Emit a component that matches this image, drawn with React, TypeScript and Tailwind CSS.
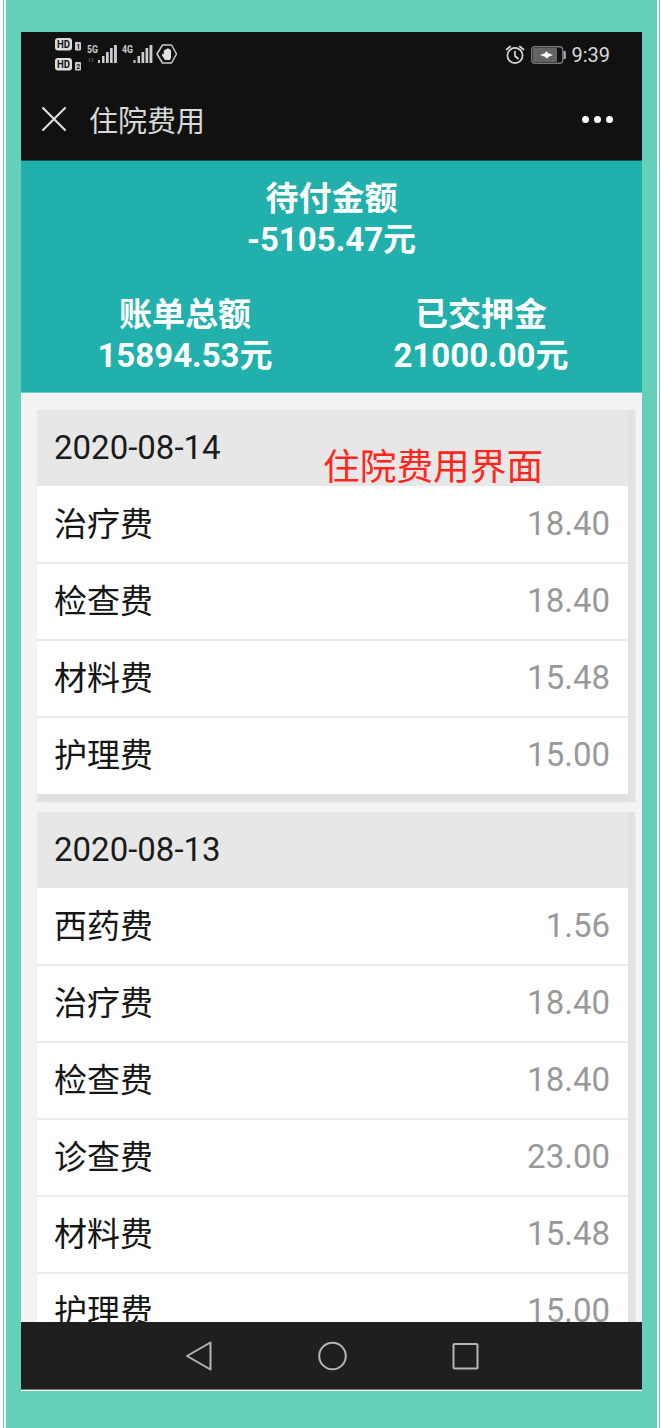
import React from 'react';

const bills = [
    {
        date: '2020-08-14',
        items: [
            { name: '治疗费', amount: '18.40' },
            { name: '检查费', amount: '18.40' },
            { name: '材料费', amount: '15.48' },
            { name: '护理费', amount: '15.00' },
        ],
    },
    {
        date: '2020-08-13',
        items: [
            { name: '西药费', amount: '1.56' },
            { name: '治疗费', amount: '18.40' },
            { name: '检查费', amount: '18.40' },
            { name: '诊查费', amount: '23.00' },
            { name: '材料费', amount: '15.48' },
            { name: '护理费', amount: '15.00' },
        ],
    },
];

const App = () => {
    return (
        <div className="w-[661px] h-[1428px] bg-white pl-[3px] pr-px overflow-hidden font-[Roboto,'Noto_Sans_CJK_SC',sans-serif]">
            <div className="h-full border-x border-[#65cfba] px-[2px]">
                <div className="h-full bg-[#65cfba] pt-8 px-[15px]">
                    <div className="h-[1359px] flex flex-col bg-[#f3f3f3] border-b border-white overflow-hidden">
                        <StatusBar />
                        <TitleBar />
                        <Summary />

                        {/* Bills by day */}
                        <div className="relative flex-1 min-h-0 overflow-hidden pl-4 pr-3.5 pt-[17px] flex flex-col gap-[18px]">
                            {bills.map((bill) => (
                                <BillCard key={bill.date} date={bill.date} items={bill.items} />
                            ))}
                            <span className="absolute left-[302px] top-[50px] text-[36.7px] leading-[50px] text-[#ff261c] whitespace-nowrap">
                                住院费用界面
                            </span>
                        </div>

                        <NavBar />
                    </div>
                </div>
            </div>
        </div>
    );
};

const StatusBar = () => {
    return (
        <div className="h-[46px] shrink-0 bg-[#111] flex items-start justify-between pl-[33px] pr-8">
            <div className="flex">
                {/* HD, signal and privacy icons */}
                <svg width="126" height="46" viewBox="0 0 126 46" fill="none">
                    <HdBadge y={6} sim="1" />
                    <HdBadge y={26} sim="2" />
                    <text x="33" y="21" fontSize="11" fontWeight="700" textLength="11" lengthAdjust="spacingAndGlyphs" fill="#ccc">5G</text>
                    <path d="M35.500 26v4M38.500 26v4" stroke="#444" strokeWidth="1.500" />
                    <Bars x={44} />
                    <text x="68" y="21" fontSize="11" fontWeight="700" textLength="11" lengthAdjust="spacingAndGlyphs" fill="#ccc">4G</text>
                    <Bars x={79.5} />
                    <path d="M108.500 13h9l5 9-5 9h-9l-5.500-9z" stroke="#ccc" strokeWidth="1.500" strokeLinejoin="round" />
                    <path d="M109.800 18.500v4l-1.800-1v2l3 4.500h5l1-2.500v-7.500l-1.500-.7-1.500-1-1.500.7z" fill="#e2e2e2" />
                </svg>
            </div>
            <div className="flex items-center h-[44px] pt-px">
                <svg width="20" height="22" viewBox="0 0 20 22" fill="none" stroke="#d8d8d8" strokeWidth="1.700" strokeLinecap="round">
                    <circle cx="10" cy="11.500" r="7.600" />
                    <path d="M1.500 5.500l3.700-3M18.500 5.500l-3.700-3M10 7.500v4.500l3 2.500" />
                </svg>
                <svg className="ml-[6px]" width="36" height="18" viewBox="0 0 36 18">
                    <rect x="0.700" y="0.700" width="31" height="16.600" rx="3" fill="#111" stroke="#777" strokeWidth="1.400" />
                    <rect x="2" y="2" width="24" height="14" rx="1" fill="#646464" />
                    <path d="M9 9l5-1.700 1-2 2.500 2L22 9l-4.500 1.700-1.500 2-2-2z" fill="#fff" />
                    <rect x="32.500" y="5" width="2.300" height="8" rx="0.500" fill="#aaa" />
                </svg>
                <span className="ml-[4px] text-[20px] leading-[24px] text-[#d8d8d8]">9:39</span>
            </div>
        </div>
    );
};

const HdBadge = ({ y, sim }: { y: number, sim: string }) => {
    return (
        <g>
            <rect x="1" y={y} width="17" height="12.500" rx="3" fill="#ddd" />
            <text x="3" y={y + 9.8} fontSize="10" fontWeight="700" textLength="13" lengthAdjust="spacingAndGlyphs" fill="#111">HD</text>
            <rect x="21" y={y + 4} width="6" height="8.500" rx="1" fill="#ccc" />
            <text x="22.200" y={y + 10.8} fontSize="7" fontWeight="700" fill="#111">{sim}</text>
        </g>
    );
};

const Bars = ({ x }: { x: number }) => {
    return (
        <g fill="#ccc">
            <rect x={x} y="28" width="2" height="3" />
            <rect x={x + 4} y="24" width="2.500" height="7" />
            <rect x={x + 8} y="20" width="2.700" height="11" />
            <rect x={x + 12} y="16" width="2.700" height="15" />
            <rect x={x + 16} y="13" width="2.900" height="18" />
        </g>
    );
};

const TitleBar = () => {
    return (
        <div className="h-[83px] shrink-0 bg-[#111] border-b border-[#155] flex items-center pl-5 pr-[29px]">
            <svg width="26" height="26" viewBox="0 0 26 26" stroke="#e0e0e0" strokeWidth="2.100" strokeLinecap="round">
                <path d="M2 2l22 22M24 2L2 24" />
            </svg>
            <span className="ml-[22px] pt-1.5 text-[29px] leading-[40px] text-[#d8d8d8]">住院费用</span>
            <div className="ml-auto flex gap-[5px]">
                <span className="size-[7px] rounded-full bg-white" />
                <span className="size-[7px] rounded-full bg-white" />
                <span className="size-[7px] rounded-full bg-white" />
            </div>
        </div>
    );
};

const Summary = () => {
    return (
        <div className="h-[232px] shrink-0 bg-[#21b0ab] border-b border-[#6cc9c5] pt-[17px] text-center text-[33px] leading-[41px] font-bold text-white">
            <div>待付金额</div>
            <div>-5105.47元</div>
            <div className="mt-[34px] pl-4 pr-[13px] grid grid-cols-2">
                <div>
                    <div>账单总额</div>
                    <div>15894.53元</div>
                </div>
                <div>
                    <div>已交押金</div>
                    <div>21000.00元</div>
                </div>
            </div>
        </div>
    );
};

const BillCard = ({ date, items }: { date: string, items: { name: string, amount: string }[] }) => {
    return (
        <div className="shrink-0 bg-white text-[33px] shadow-[7px_0_1px_#e2e2e2,0_8px_1px_#e2e2e2,7px_8px_1px_#e2e2e2]">
            <div className="h-[76px] bg-[#e7e7e7] flex items-center px-[18px] text-[#1b1b1b]">
                <span className="-ml-px">{date}</span>
            </div>
            <div className="pt-px divide-y-2 divide-[#ebebeb]">
                {items.map((item) => (
                    <div key={item.name} className="h-[77px] last:h-[76px] flex items-center justify-between pl-[17px] pr-[18px]">
                        <span className="text-[#161616]">{item.name}</span>
                        <span className="pb-0.5 text-[#999]">{item.amount}</span>
                    </div>
                ))}
            </div>
        </div>
    );
};

const NavBar = () => {
    return (
        <div className="h-[68px] shrink-0 bg-[#1f1f1f] border-b border-[#777] flex items-center">
            <svg width="621" height="67" viewBox="0 0 621 67" fill="none" stroke="#b5b5b5" strokeWidth="2" strokeLinejoin="round">
                <path d="M166 34l23.500-13.500v27z" />
                <circle cx="311.500" cy="34" r="13.300" />
                <rect x="432.500" y="22" width="24" height="24.500" rx="1" />
            </svg>
        </div>
    );
};

export default App;
